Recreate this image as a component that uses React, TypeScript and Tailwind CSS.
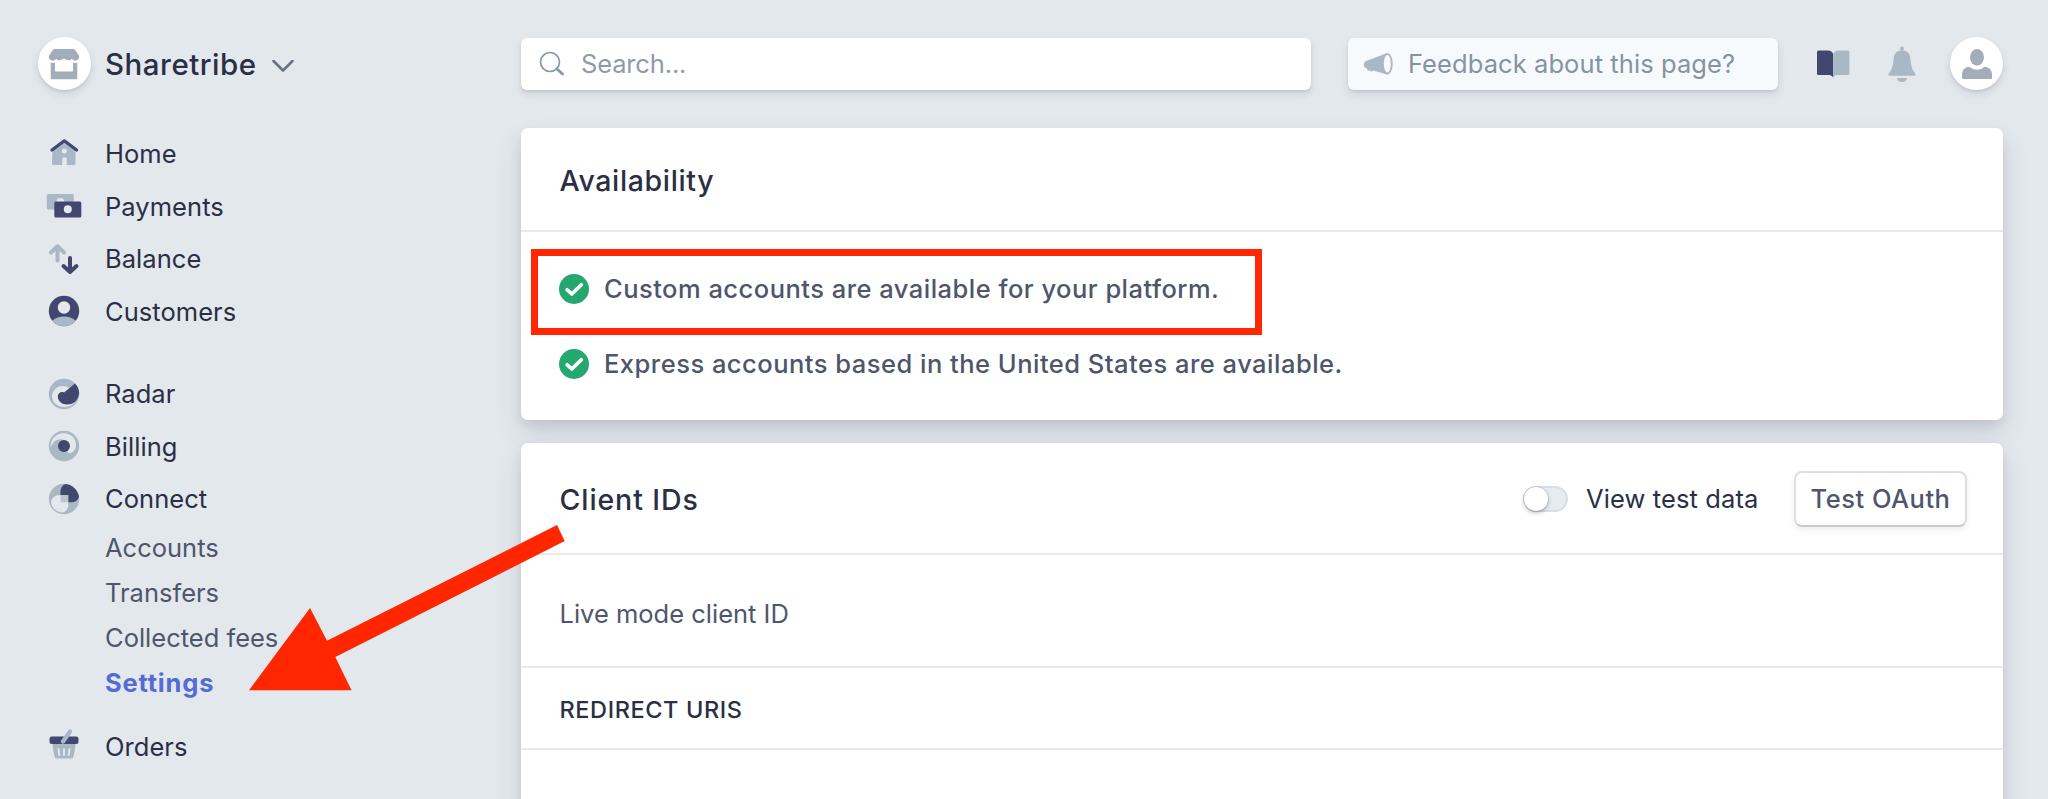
import type { ReactNode } from "react";

const DARK = "#424770";
const LIGHT = "#aab7c4";
const BG = "#e3e8ec";

const HomeIcon = () => (
  <svg viewBox="0 0 32 32" className="-mt-0.5 size-8">
    <path d="M4.5 13 16 4l11.500 9v13.500a1.500 1.500 0 0 1-1.500 1.500h-7.200v-6.500a1 1 0 0 0-1-1h-2.600a1 1 0 0 0-1 1V28H5.500A1.500 1.500 0 0 1 4 26.500z" fill={LIGHT} />
    <circle cx="16.300" cy="14" r="2.500" fill={BG} />
    <path d="M4 13 16.300 3.800 28.600 13" fill="none" stroke={DARK} strokeWidth="3.200" strokeLinecap="round" strokeLinejoin="round" />
  </svg>
);

const PaymentsIcon = () => (
  <svg viewBox="0 0 36 32" className="h-8 w-9">
    <rect x="0.800" y="4" width="27" height="15.500" rx="1.600" fill={LIGHT} />
    <circle cx="14.300" cy="12" r="4" fill={BG} />
    <rect x="8.300" y="11.500" width="27" height="16" rx="1.600" fill={DARK} />
    <circle cx="21.800" cy="19.200" r="4" fill={BG} />
  </svg>
);

const BalanceIcon = () => (
  <svg viewBox="0 0 32 32" className="size-8" fill="none" strokeWidth="4" strokeLinecap="round" strokeLinejoin="round">
    <path d="M9.500 17.500V4M3 9.500 9.500 3.300 16 9.500" stroke={LIGHT} />
    <path d="M22 15v13M15.500 23 22 29l6.500-6" stroke={DARK} />
  </svg>
);

const CustomersIcon = () => (
  <svg viewBox="0 0 32 32" className="size-8">
    <circle cx="16" cy="16" r="15.200" fill={DARK} />
    <path d="M4.300 25.800C7.500 22.800 11.500 21.500 16 21.500s8.500 1.300 11.700 4.300A15.200 15.200 0 0 1 16 31.200 15.200 15.200 0 0 1 4.300 25.800z" fill={LIGHT} />
    <circle cx="16" cy="12.500" r="6.200" fill={BG} />
  </svg>
);

const RadarIcon = () => (
  <svg viewBox="0 0 32 32" className="size-8">
    <circle cx="16" cy="16" r="15.200" fill={LIGHT} />
    <path d="M20.500 9.500A11 11 0 0 0 4 17.500C4 24.500 9.500 29 16.500 29 24.500 29 29.500 23 30 16z" fill={BG} />
    <path d="M27 5.500A15.200 15.200 0 0 1 31.200 15C30 22 26.500 26.500 19 26.500c-5 0-9.200-3.500-9.200-8 0-3.200 3.200-5.300 6.200-4z" fill={DARK} />
  </svg>
);

const BillingIcon = () => (
  <svg viewBox="0 0 32 32" className="size-8">
    <circle cx="16" cy="16" r="15.200" fill={LIGHT} />
    <path d="M2.700 18A13 12.800 0 0 1 16 3.200c6.500 0 12 5 12 11.500 0 5-3.300 8.500-7.500 8.500L12 10C7 10 4 13 2.700 18z" fill={BG} />
    <path d="M5 13.500C8 8.500 16 8 19 12l-3 8z" fill={LIGHT} />
    <circle cx="16" cy="16" r="6" fill={DARK} />
  </svg>
);

const ConnectIcon = () => (
  <svg viewBox="0 0 32 32" className="size-8">
    <circle cx="16" cy="16" r="15.200" fill={LIGHT} />
    <path d="M12.500 8.500c0-4 2.200-6.500 5-7.500A15.200 15.200 0 0 1 31 14c-1.200 3.500-4 5.300-7.500 5.300h-11z" fill={DARK} />
    <path d="M3 18.500c.8-3.800 4-6.300 7.500-6.300h9.700V22c0 4-2.200 6.500-5.200 7.500C8 29.300 3 24.500 3 18.500z" fill={BG} />
    <path d="M12.500 12.200h7.700v7.100h-7.700z" fill="#bac5d0" />
  </svg>
);

const OrdersIcon = () => (
  <svg viewBox="0 0 32 32" className="-mt-1 size-8">
    <path d="M4 14h24l-2.300 14a3 3 0 0 1-3 2.500H9.300a3 3 0 0 1-3-2.500z" fill={LIGHT} />
    <path d="m10.500 21 .8 6M16 21v6M21.500 21l-.8 6" stroke={BG} strokeWidth="1.900" strokeLinecap="round" />
    <rect x="1.500" y="8.500" width="29" height="7.500" rx="2.500" fill={DARK} />
    <path d="M15 13.500 22 3.500" stroke={LIGHT} strokeWidth="4.400" strokeLinecap="round" />
  </svg>
);

const StoreIcon = () => (
  <svg viewBox="0 0 32 32" className="size-8" fill="#a3acb9">
    <path d="M6.500 1h19a2 2 0 0 1 1.700 1L30.500 7c1.500 3-.3 5.500-3 5.500-2 0-3-.8-3.800-1.800-.8 1-1.800 1.500-3.300 1.500-2 0-3.200-.8-4.400-1.900-1.200 1.100-2.400 1.900-4.400 1.900-1.500 0-2.500-.5-3.300-1.500-.8 1-1.800 1.800-3.800 1.800-2.700 0-4.500-2.500-3-5.500L4.800 2A2 2 0 0 1 6.500 1z" />
    <path d="M2.700 14.500c1.600.6 3 .5 4.300 0v9h18v-9c1.300.5 2.700.6 4.300 0V30a1.300 1.300 0 0 1-1.300 1.300H4A1.300 1.300 0 0 1 2.700 30z" />
  </svg>
);

const Check = () => (
  <svg viewBox="0 0 30 30" className="-mt-0.5 size-[30px] shrink-0">
    <circle cx="15" cy="15" r="15" fill="#24a870" />
    <path d="m8.200 15.800 4.600 4.200 9.500-9.300" fill="none" stroke="#fff" strokeWidth="3.700" strokeLinecap="round" strokeLinejoin="round" />
  </svg>
);

const NavItem = ({ icon, label }: { icon: ReactNode; label: string }) => (
  <a className="flex h-[52.500px] items-center">
    <span className="flex w-16 shrink-0 justify-center">{icon}</span>
    <span className="ml-[9px] tracking-[0.05px]">{label}</span>
  </a>
);

const cardShadow = "shadow-[0_14px_28px_rgba(60,66,110,0.12),0_6px_12px_rgba(0,0,0,0.09)]";
const smallShadow = "shadow-[0_4px_8px_rgba(50,50,93,0.11),0_2px_3px_rgba(0,0,0,0.08)]";

export default function App() {
  return (
    <div className="relative flex h-[799px] w-[2048px] overflow-hidden bg-[#e3e8ec] font-['Inter',sans-serif] text-[25.500px] leading-none text-[#2a2f45]">
      <aside className="w-[521px] shrink-0 pl-8">
        <div className="flex h-[127.500px] items-center pl-[5.500px]">
          <span className={`flex size-[53px] items-center justify-center rounded-full bg-white ${smallShadow}`}>
            <StoreIcon />
          </span>
          <span className="ml-[14.500px] pt-[2px] text-[29.500px] font-medium tracking-[0.500px]">Sharetribe</span>
          <svg viewBox="0 0 22 12" className="ml-[15px] mt-[5px] h-3 w-[22px]" fill="none" stroke="#697386" strokeWidth="2.600" strokeLinecap="round" strokeLinejoin="round">
            <path d="m1.500 1 9.500 9.500L20.500 1" />
          </svg>
        </div>
        <nav>
          <NavItem icon={<HomeIcon />} label="Home" />
          <NavItem icon={<PaymentsIcon />} label="Payments" />
          <NavItem icon={<BalanceIcon />} label="Balance" />
          <NavItem icon={<CustomersIcon />} label="Customers" />
          <div className="h-[30px]" />
          <NavItem icon={<RadarIcon />} label="Radar" />
          <NavItem icon={<BillingIcon />} label="Billing" />
          <NavItem icon={<ConnectIcon />} label="Connect" />
          <div className="flex flex-col pl-[73px] text-[#4f566b]">
            <a className="flex h-[45px] items-center">Accounts</a>
            <a className="flex h-[45px] items-center">Transfers</a>
            <a className="flex h-[45px] items-center">Collected fees</a>
            <a className="flex h-[45px] items-center font-bold tracking-[0.800px] text-[#556cd6]">Settings</a>
          </div>
          <div className="h-[15px]" />
          <NavItem icon={<OrdersIcon />} label="Orders" />
        </nav>
      </aside>

      <main className="flex w-[1482px] shrink-0 flex-col">
        <header className="flex h-[127.500px] shrink-0 items-center">
          <div className={`flex h-[52.500px] w-[790px] items-center rounded-[6px] bg-white pl-[18px] text-[#9299a8] ${smallShadow}`}>
            <svg viewBox="0 0 26 26" className="size-[26px]" fill="none" stroke="#8898aa" strokeLinecap="round">
              <circle cx="11" cy="11" r="9.500" strokeWidth="1.700" />
              <path d="m18 18 5.500 5" strokeWidth="3" />
            </svg>
            <span className="ml-4 tracking-[-0.150px]">Search...</span>
          </div>
          <div className={`ml-[37px] flex h-[52.500px] w-[430px] items-center rounded-[6px] bg-[#f7fafc] pl-[15px] text-[#8792a2] ${smallShadow}`}>
            <svg viewBox="0 0 30 24" className="h-6 w-[30px]">
              <path d="M24 1C15 4.500 9 7 4 8.500 1 9.500.5 12 1 14c.5 1.500 1.500 2 3 2.500l1 2.500 2-.8.800 1.500 2.500-1.200L24 22.500z" fill="#aab7c4" />
              <ellipse cx="24.300" cy="11.800" rx="4.500" ry="9.700" fill="#f7fafc" stroke="#aab7c4" strokeWidth="1.800" />
            </svg>
            <span className="ml-[15px] tracking-[0.080px]">Feedback about this page?</span>
          </div>
          <svg viewBox="0 0 34 30" className="ml-[38px] mt-px h-[30px] w-[34px]">
            <path d="M1 3a1.500 1.500 0 0 1 1.500-1.500H12A5.500 5.500 0 0 1 17.200 5v23.500C16 26.500 14 26 12 26H2.500A1.500 1.500 0 0 1 1 24.500z" fill="#424770" />
            <path d="M33.400 3a1.500 1.500 0 0 0-1.500-1.500h-9.500A5.500 5.500 0 0 0 17.200 5v23.500c1.200-2 3.200-2.500 5.200-2.500h9.500a1.500 1.500 0 0 0 1.500-1.500z" fill="#aab7c4" />
          </svg>
          <svg viewBox="0 0 30 36" className="ml-[37px] mt-px h-9 w-[30px]" fill="#aab7c4">
            <circle cx="15" cy="2.500" r="2" />
            <path d="M15 4.500c5 0 7.800 2.500 8.300 7.500.5 6 1.200 11 5 15.500.7 1.200.2 2.200-1 2.200H2.700c-1.200 0-1.700-1-1-2.200C5.500 23 6.200 18 6.700 12 7.200 7 10 4.500 15 4.500z" />
            <path d="M10 32h10c-.3 2.500-2.300 4-5 4s-4.700-1.500-5-4z" />
          </svg>
          <span className={`ml-auto flex size-[53px] items-center justify-center rounded-full bg-white ${smallShadow}`}>
            <svg viewBox="0 0 32 32" className="size-8" fill="#a3acb9">
              <ellipse cx="16" cy="9.300" rx="7" ry="8.300" />
              <path d="M8.500 18.800c2 2 4.500 3 7.500 3s5.500-1 7.500-3c5 .3 7.500 3.500 7.500 8.200v2.500c0 1-.5 1.500-1.500 1.500h-27C1.500 31 1 30.500 1 29.500V27c0-4.700 2.500-7.900 7.500-8.200z" />
            </svg>
          </span>
        </header>

        <section className={`h-[292px] shrink-0 rounded-[7px] bg-white ${cardShadow}`}>
          <h2 className="flex h-[104.500px] items-center border-b-2 border-[#e6ebf1] pl-[38.500px] pt-[4px] text-[28.500px] font-medium tracking-[0.650px]">Availability</h2>
          <ul className="pt-[20px] text-[#4f566b]">
            <li className="flex h-[75px] items-center pl-[38px]">
              <Check />
              <span className="-mt-0.5 ml-[15px] font-medium tracking-[0.480px]">Custom accounts are available for your platform.</span>
            </li>
            <li className="flex h-[75px] items-center pl-[38px]">
              <Check />
              <span className="-mt-0.5 ml-[15px] font-medium tracking-[0.490px]">Express accounts based in the United States are available.</span>
            </li>
          </ul>
        </section>

        <section className={`mt-[23px] h-[400px] shrink-0 rounded-[7px] bg-white ${cardShadow}`}>
          <div className="flex h-[112px] items-center border-b-2 border-[#e6ebf1] pl-[38.500px] pr-[36px] pt-[3px]">
            <h2 className="pt-[2px] text-[28.500px] font-medium tracking-[0.900px]">Client IDs</h2>
            <span className="ml-auto flex h-[26px] w-[45px] items-center rounded-full border-2 border-[#d9dee4] bg-[#e6ebf0]">
              <span className="-ml-px size-6 rounded-full bg-white shadow-[0_2px_4px_rgba(0,0,0,0.25),0_0_0_1px_rgba(0,0,0,0.08)]" />
            </span>
            <span className="-mt-px ml-[18px] w-[172px] whitespace-nowrap tracking-[0.120px]">View test data</span>
            <button className="ml-[36px] h-[56px] w-[173px] whitespace-nowrap rounded-[8px] border-2 border-[#dddee1] border-b-[#c9cacd] bg-white font-medium tracking-[0.500px] text-[#4f566b] shadow-[0_3px_6px_rgba(0,0,0,0.07)]">
              Test OAuth
            </button>
          </div>
          <div className="flex h-[113px] items-center border-b-2 border-[#e6ebf1] pl-[38.500px] pt-[7px] text-[#4f566b]">Live mode client ID</div>
          <div className="flex h-[82.500px] items-center border-b-2 border-[#e6ebf1] pl-[38.500px] pt-[3px] text-[23.500px] font-medium tracking-[0.600px]">REDIRECT URIS</div>
        </section>
      </main>

      <div className="pointer-events-none absolute left-[531px] top-[249px] h-[86px] w-[731px] border-[7px] border-[#ff2600]" />
      <svg viewBox="0 0 320 170" className="pointer-events-none absolute left-[248px] top-[524px] h-[170px] w-[320px]">
        <path d="M1 166.300 62 84l17 32.700L309 1l7.700 16L87.300 133l16.200 33.300z" fill="#ff2600" />
      </svg>
    </div>
  );
}
